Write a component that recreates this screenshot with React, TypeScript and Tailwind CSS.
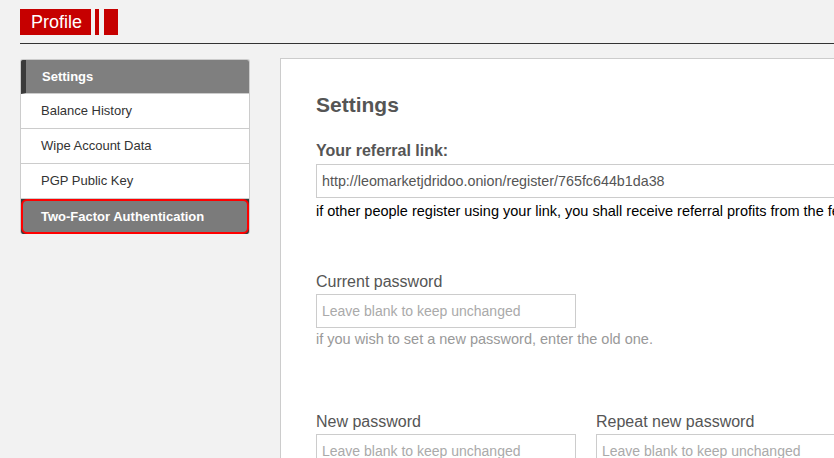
const menu = ["Balance History", "Wipe Account Data", "PGP Public Key"];

function Field({ label, help }: { label: string; help?: string }) {
  return (
    <div className="w-[260px]">
      <label className="block text-[16px] leading-[20px] text-[#555]">{label}</label>
      <input
        type="password"
        placeholder="Leave blank to keep unchanged"
        className="mt-[2px] block h-[34px] w-[260px] border border-[#ccc] bg-white px-[5px] text-[14px] text-[#555] outline-none placeholder:text-[#aaa]"
      />
      {help && <p className="mt-[2px] whitespace-nowrap text-[14.5px] leading-[18px] text-[#999]">{help}</p>}
    </div>
  );
}

export default function App() {
  return (
    <div className="h-[458px] w-[834px] overflow-hidden bg-[#f2f2f2] pl-5 font-['Liberation_Sans',Arial,sans-serif]">
      <header className="w-[900px] border-b border-[#333] pt-[9px] pb-[8px]">
        <div className="flex h-[26px] items-stretch">
          <div className="flex w-[71px] items-center bg-[#c60000] pl-[11px] text-[18px] leading-none text-white">
            Profile
          </div>
          <div className="ml-[4px] w-[4px] bg-[#c60000]" />
          <div className="ml-[5px] w-[14px] bg-[#c60000]" />
        </div>
      </header>

      <div className="mt-[15px] flex items-start gap-[30px]">
        <nav className="w-[230px] shrink-0 overflow-hidden rounded-[3px] border border-b-0 border-[#ccc] bg-white text-[13px]">
          <div className="flex h-[34px] items-center border-b border-[#ccc] border-l-[5px] border-l-[#3a3a3a] bg-[#7f7f7f] pl-[16px] font-bold text-white">
            Settings
          </div>
          {menu.map((m) => (
            <div key={m} className="flex h-[35px] items-center border-b border-[#ccc] pl-[20px] text-[#333]">
              {m}
            </div>
          ))}
          <div className="bg-[#3a3a3a]">
            <div className="flex h-[35px] items-center whitespace-nowrap rounded-[6px] border-2 border-[#f00] bg-[#7b7b7b] pl-[18px] font-bold text-white">
              Two-Factor Authentication
            </div>
          </div>
        </nav>

        <main className="-mt-px h-[420px] w-[640px] shrink-0 border border-[#ccc] bg-white pl-[35px] pt-[34px]">
          <h1 className="text-[21px] leading-[24px] font-bold text-[#555]">Settings</h1>

          <label className="mt-[24px] block text-[16px] leading-[20px] font-bold text-[#555]">Your referral link:</label>
          <input
            readOnly
            value="http://leomarketjdridoo.onion/register/765fc644b1da38"
            className="mt-[3px] block h-[34px] w-[600px] border border-[#ccc] bg-white px-[5px] text-[14.3px] text-[#555] outline-none"
          />
          <p className="mt-[4px] whitespace-nowrap text-[14.5px] leading-[18px] text-black">
            if other people register using your link, you shall receive referral profits from the fees of their orders.
          </p>

          <div className="mt-[52px]">
            <Field label="Current password" help="if you wish to set a new password, enter the old one." />
          </div>

          <div className="mt-[64px] flex gap-[20px]">
            <Field label="New password" />
            <Field label="Repeat new password" />
          </div>
        </main>
      </div>
    </div>
  );
}
